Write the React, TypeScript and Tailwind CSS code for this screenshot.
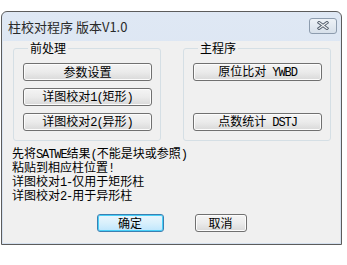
import React from "react";

const cjk = { fontFamily: '"Noto Sans CJK SC", "Noto Sans", sans-serif' };
const mono = { fontFamily: '"Liberation Mono", "Noto Sans CJK SC", monospace' };

// SimSun-like look: half-width ASCII in a narrow mono, CJK at full size
function Mixed({ text }: { text: string }) {
  const parts = text.match(/[\x20-\x7e]+|[^\x20-\x7e]+/g) || [];
  return (
    <span>
      {parts.map((p, i) =>
        /^[\x20-\x7e]+$/.test(p) ? (
          <span key={i} className="text-[12px] tracking-[-1.1px] whitespace-pre" style={mono}>
            {p}
          </span>
        ) : (
          <span key={i} style={cjk}>
            {p}
          </span>
        )
      )}
    </span>
  );
}

function Btn({ label, w = "w-[129px]" }: { label: string; w?: string }) {
  return (
    <button className={`${w} h-[18px] flex items-center justify-center rounded-[3px] border border-[#707070] bg-gradient-to-b from-[#f4f4f4] via-[#ebebeb] to-[#d9d9d9] text-[12px] leading-none text-black shadow-[inset_0_0_0_1px_#fcfcfc]`}>
      <Mixed text={label} />
    </button>
  );
}

function Group({ title, children }: { title: string; children: React.ReactNode }) {
  return (
    <fieldset className="w-[148px] h-[100px] border border-[#d5dfe5] rounded-[3px] pl-[9px] pr-[8px]">
      <legend className="ml-[5px] px-[2px] text-[12px] leading-[14px] text-black" style={cjk}>
        {title}
      </legend>
      <div className="flex flex-col justify-between h-[80px] pt-[8px] pb-[4px]">{children}</div>
    </fieldset>
  );
}

export default function App() {
  return (
    <div className="w-[347px] h-[265px] bg-white pt-[11px] pl-[1px]">
      <div className="w-[341px] h-[234px] flex flex-col border border-[#5c5c5c] rounded-t-[6px] bg-gradient-to-b from-[#dfe8f4] to-[#d4e0ef]">
        {/* title bar */}
        <div className="h-[29px] flex items-center justify-between pl-[6px] pr-[4px]">
          <span className="text-[13px] text-[#2a2a2a]" style={cjk}>
            柱校对程序 版本V1.0
          </span>
          <div className="w-[28px] h-[16px] mt-[-2px] flex items-center justify-center rounded-[3px] border border-[#8d9cae] bg-gradient-to-b from-[#eef2f7] to-[#d7e0ea]">
            <svg width="12" height="9" viewBox="0 0 12 9">
              <path d="M2 1.5 L10 7.5 M10 1.5 L2 7.5" stroke="#55606e" strokeWidth="3" strokeLinecap="square" />
              <path d="M2 1.5 L10 7.5 M10 1.5 L2 7.5" stroke="#f4f6f8" strokeWidth="1.2" strokeLinecap="square" />
            </svg>
          </div>
        </div>

        {/* client area */}
        <div className="flex-1 mx-[1px] mb-[1px] bg-[#f0f0f0] flex flex-col">
          <div className="flex pl-[10px] gap-[22px]">
            <Group title="前处理">
              <Btn label="参数设置" />
              <Btn label="详图校对1(矩形)" />
              <Btn label="详图校对2(异形)" />
            </Group>
            <Group title="主程序">
              <Btn label="原位比对 YWBD" />
              <Btn label="点数统计 DSTJ" />
            </Group>
          </div>

          <div className="mt-[6px] pl-[9px] text-[12px] leading-[11px] text-black">
            <div><Mixed text="先将SATWE结果(不能是块或参照)" /></div>
            <div><Mixed text="粘贴到相应柱位置!" /></div>
            <div><Mixed text="详图校对1-仅用于矩形柱" /></div>
            <div><Mixed text="详图校对2-用于异形柱" /></div>
          </div>

          <div className="mt-auto mb-[11px] flex justify-center gap-[31px]">
            <button
              className="w-[67px] h-[18px] flex items-center justify-center rounded-[3px] border border-[#3c7fb1] bg-gradient-to-b from-[#eaf6fd] via-[#d9f0fc] to-[#bee6fd] text-[12px] leading-none text-black shadow-[inset_0_0_0_1px_#48d0f8]"
              style={cjk}
            >
              确定
            </button>
            <Btn label="取消" w="w-[52px]" />
          </div>
        </div>
      </div>
    </div>
  );
}
